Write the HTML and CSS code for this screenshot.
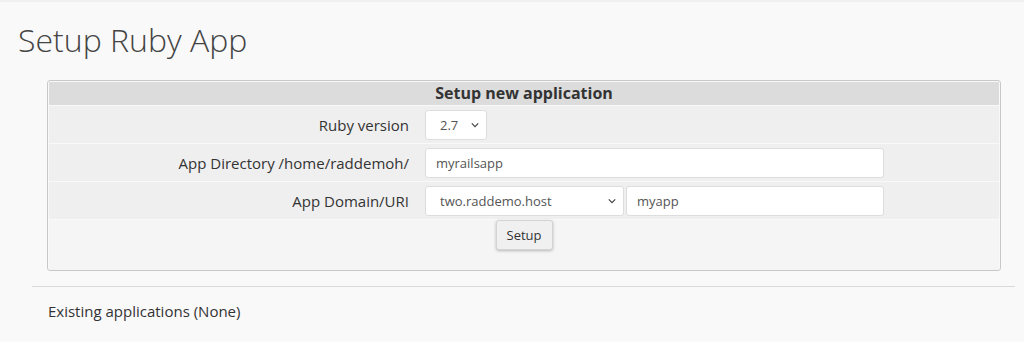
FILE: index.html
```html
<!DOCTYPE html>
<html>
<head>
<meta charset="utf-8">
<link rel="stylesheet" href="styles.css">
</head>
<body>
<div class="page">
  <h1 class="title">Setup Ruby App</h1>
  <div class="panel">
    <div class="panel-head">Setup new application</div>
    <div class="row">
      <div class="label">Ruby version</div>
      <div class="field">
        <div class="select small"><span>2.7</span><svg class="chev" viewBox="0 0 10 6"><path d="M1 1l4 4 4-4" fill="none" stroke="#444" stroke-width="1.5"/></svg></div>
      </div>
    </div>
    <div class="row">
      <div class="label">App Directory /home/raddemoh/</div>
      <div class="field">
        <div class="input wide">myrailsapp</div>
      </div>
    </div>
    <div class="row">
      <div class="label">App Domain/URI</div>
      <div class="field">
        <div class="select domain"><span>two.raddemo.host</span><svg class="chev" viewBox="0 0 10 6"><path d="M1 1l4 4 4-4" fill="none" stroke="#444" stroke-width="1.5"/></svg></div>
        <div class="input uri">myapp</div>
      </div>
    </div>
    <div class="actions">
      <button class="btn">Setup</button>
    </div>
  </div>
  <div class="divider"></div>
  <p class="existing">Existing applications (None)</p>
</div>
</body>
</html>
```
FILE: styles.css
```css
html, body {
  margin: 0;
  padding: 0;
  background: #f9f9f9;
}
body {
  font-family: "Open Sans", "Liberation Sans", sans-serif;
  color: #333;
  border-top: 2px solid #f0f0f0;
}
.page {
  padding: 0 9px 0 32px;
}
.title {
  margin: 0 0 0 -14px;
  padding-top: 16px;
  height: 62px;
  font-size: 32px;
  font-weight: 300;
  line-height: 44px;
  color: #444;
}
.panel {
  margin: 0 0 0 15px;
  width: 950px;
  border: 1px solid #c8c8c8;
  border-radius: 3px;
  padding: 1px 1px 0 1px;
  background: #f9f9f9;
  height: 188px;
}
.panel-head {
  background: #dcdcdc;
  height: 23px;
  line-height: 23px;
  text-align: center;
  font-weight: 700;
  font-size: 16px;
  color: #333;
  margin-bottom: 1px;
}
.row {
  display: grid;
  grid-template-columns: 368px 1fr;
  background: #efefef;
  height: 37px;
  margin-bottom: 1px;
  align-items: center;
}
.label {
  text-align: right;
  font-size: 15px;
  padding-right: 8px;
  color: #333;
}
.field {
  display: flex;
  gap: 2px;
  padding-left: 8px;
  align-items: center;
}
.select, .input {
  box-sizing: border-box;
  height: 30px;
  background: #fff;
  border: 1px solid #ddd;
  border-radius: 3px;
  font-size: 13px;
  color: #555;
  display: flex;
  align-items: center;
  padding-left: 10px;
}
.select {
  justify-content: space-between;
  padding-left: 14px;
  padding-right: 7px;
}
.chev {
  width: 8px;
  height: 6px;
}
.small { width: 62px; }
.wide { width: 459px; }
.domain { width: 199px; }
.uri { width: 258px; }
.actions {
  background: #f5f5f5;
  height: 50px;
  display: flex;
  justify-content: center;
  align-items: flex-start;
}
.btn {
  box-sizing: border-box;
  width: 57px;
  height: 30px;
  font-family: inherit;
  font-size: 13px;
  color: #333;
  background: #f0f0f0;
  border: 1px solid #d4d4d4;
  border-radius: 3px;
  box-shadow: 0 1px 3px rgba(0,0,0,0.25);
  padding: 0;
}
.divider {
  margin-top: 15px;
  height: 1px;
  background: #dadada;
  width: 983px;
}
.existing {
  margin: 14px 0 0 16px;
  font-size: 15px;
  color: #333;
  line-height: 20px;
}
```
